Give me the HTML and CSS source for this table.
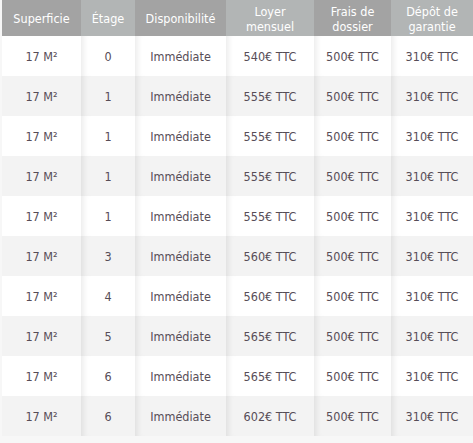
FILE: index.html
```html
<!DOCTYPE html>
<html lang="fr">
<head>
<meta charset="utf-8">
<link rel="stylesheet" href="styles.css">
</head>
<body>
<table class="lots">
  <colgroup>
    <col class="c1"><col class="c2"><col class="c3"><col class="c4"><col class="c5"><col class="c6">
  </colgroup>
  <thead>
    <tr>
      <th class="dark">Superficie</th>
      <th class="light">Étage</th>
      <th class="dark">Disponibilité</th>
      <th class="light">Loyer<br>mensuel</th>
      <th class="dark">Frais de<br>dossier</th>
      <th class="light">Dépôt de<br>garantie</th>
    </tr>
  </thead>
  <tbody>
    <tr><td>17 M²</td><td>0</td><td>Immédiate</td><td>540€ TTC</td><td>500€ TTC</td><td>310€ TTC</td></tr>
    <tr><td>17 M²</td><td>1</td><td>Immédiate</td><td>555€ TTC</td><td>500€ TTC</td><td>310€ TTC</td></tr>
    <tr><td>17 M²</td><td>1</td><td>Immédiate</td><td>555€ TTC</td><td>500€ TTC</td><td>310€ TTC</td></tr>
    <tr><td>17 M²</td><td>1</td><td>Immédiate</td><td>555€ TTC</td><td>500€ TTC</td><td>310€ TTC</td></tr>
    <tr><td>17 M²</td><td>1</td><td>Immédiate</td><td>555€ TTC</td><td>500€ TTC</td><td>310€ TTC</td></tr>
    <tr><td>17 M²</td><td>3</td><td>Immédiate</td><td>560€ TTC</td><td>500€ TTC</td><td>310€ TTC</td></tr>
    <tr><td>17 M²</td><td>4</td><td>Immédiate</td><td>560€ TTC</td><td>500€ TTC</td><td>310€ TTC</td></tr>
    <tr><td>17 M²</td><td>5</td><td>Immédiate</td><td>565€ TTC</td><td>500€ TTC</td><td>310€ TTC</td></tr>
    <tr><td>17 M²</td><td>6</td><td>Immédiate</td><td>565€ TTC</td><td>500€ TTC</td><td>310€ TTC</td></tr>
    <tr><td>17 M²</td><td>6</td><td>Immédiate</td><td>602€ TTC</td><td>500€ TTC</td><td>310€ TTC</td></tr>
  </tbody>
</table>
</body>
</html>
```
FILE: styles.css
```css
html, body {
  margin: 0;
  padding: 0;
  background: #f7f7f7;
}
body {
  padding-left: 2px;
  font-family: "DejaVu Sans Condensed", "DejaVu Sans", Verdana, sans-serif;
  font-size: 12.5px;
}
.lots {
  border-collapse: collapse;
  border-spacing: 0;
  table-layout: fixed;
  width: 471px;
}
.c1 { width: 79px; }
.c2 { width: 54px; }
.c3 { width: 91px; }
.c4 { width: 88px; }
.c5 { width: 77px; }
.c6 { width: 82px; }
.lots th {
  height: 35px;
  padding: 1px 2px 0;
  font-weight: normal;
  color: #fff;
  line-height: 15px;
  text-align: center;
  vertical-align: middle;
}
.lots th.dark { background: #a3a3a3; }
.lots th.light { background: #b2b5b5; }
.lots td {
  height: 39px;
  padding: 1px 2px 0;
  text-align: center;
  vertical-align: middle;
  color: #574d57;
  box-shadow: inset 7px 0 6px -5px rgba(0, 0, 0, 0.09);
}
.lots td:first-child { box-shadow: none; }
.lots tbody tr:nth-child(odd) td { background: #ffffff; }
.lots tbody tr:nth-child(even) td { background: #f3f3f3; }
```
